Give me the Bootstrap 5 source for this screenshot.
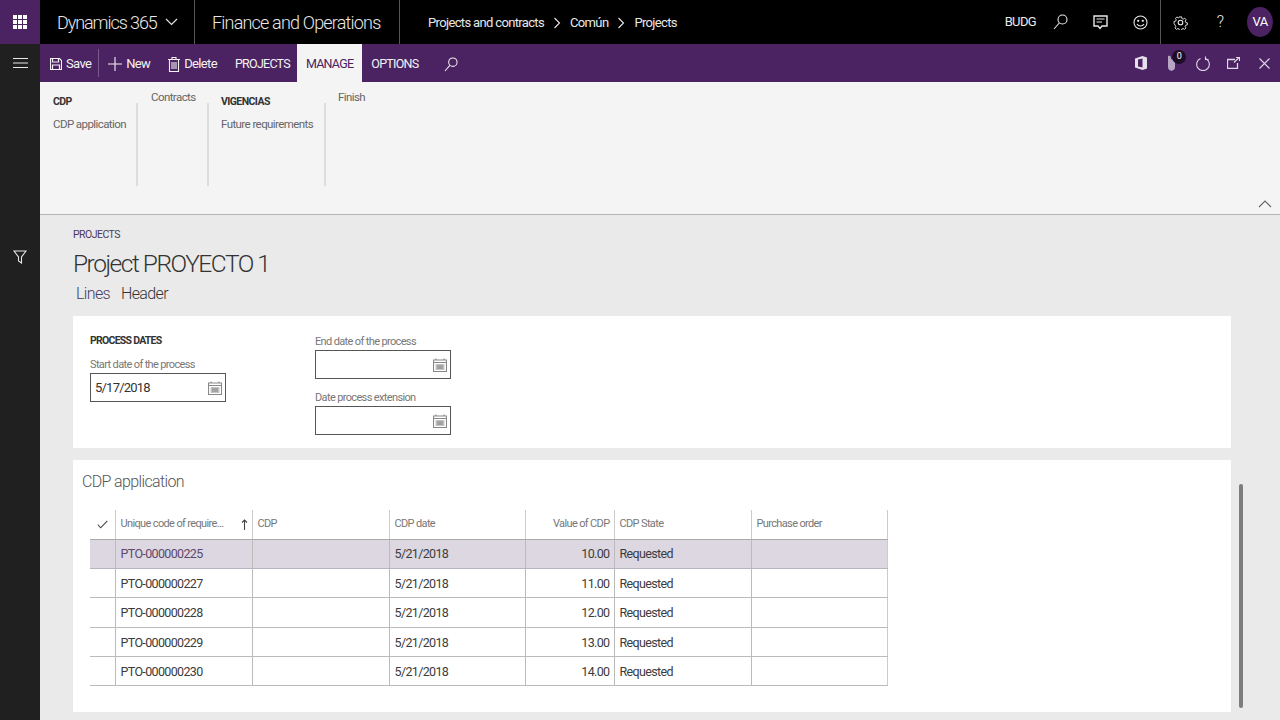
<!DOCTYPE html>
<html lang="en">
<head>
<meta charset="utf-8">
<title>Project PROYECTO 1</title>
<link href="https://cdn.jsdelivr.net/npm/bootstrap@5.3.0/dist/css/bootstrap.min.css" rel="stylesheet">
<style>
html,body{height:720px;overflow:hidden}
body{font-family:Roboto,"Open Sans",sans-serif;letter-spacing:-.04em;background:#eaeaea;color:#333}
svg{display:block;fill:none;stroke:currentColor;stroke-width:1.1}
.topbar{height:44px;background:#000;color:#e8e8e8;white-space:nowrap}
.waffle{width:40px;height:44px;background:#4b2362}
.brand{width:155px;padding-left:17px;font-size:18px;height:44px;border-right:1px solid #555;font-weight:300;letter-spacing:-.06em}
.appname{width:205px;padding-left:17px;font-size:18px;height:44px;border-right:1px solid #555;font-weight:300;letter-spacing:-.045em}
.crumbs{padding:1px 0 0 28px;font-size:13px;gap:9px;letter-spacing:-.05em}
.tools{height:44px}
.budg{font-size:13px;margin-right:4px}
.tool-btn{width:40px;height:44px}
.tool-q{font-size:16px;font-weight:300}
.sep-left{border-left:1px solid #555}
.avatar{width:26px;height:30px;margin:0 7px;border-radius:50%;background:#4b2362;color:#fff;font-size:13px}
.rail{width:40px;height:676px;background:#202020;color:#e8e8e8;flex:none}
.rail-btn{height:38px}
.rail-filter{margin-top:155px;height:40px}
.mainpane{position:relative;height:676px;overflow:hidden}
.cmdbar{height:38px;background:#4b2362;color:#f2f2f2;font-size:13px;white-space:nowrap;letter-spacing:-.05em}
.cmd{height:38px;padding:2px 9px 0;gap:4px}
.cmd-save{padding:2px 7px 0 10px;border-right:1px solid #7a5a8d;height:28px}
.cmd-new,.cmd-del{padding-right:18px}
.cmd-del,.cmd-proj{padding-left:0}
.cmd-proj{padding-right:7px}
.caps{font-size:12.5px;letter-spacing:-.06em}
.cmd-active{background:#f4f4f4;color:#4b2362}
.right-icons{color:#e0d6e6}
.right-btn{width:31px;height:38px;position:relative}
.right-first{margin-right:0;margin-left:2px}
.count{position:absolute;top:6px;left:16px;width:14px;height:14px;border-radius:50%;background:#1c0e29;color:#fff;font-size:9px}
.ribbon{height:133px;background:#f4f4f4;border-bottom:1px solid #b5b5b5;position:relative;font-size:11.5px;color:#666;padding-left:13px;white-space:nowrap;letter-spacing:-.05em}
.rb-group{height:104px;margin-top:8px}
.rb-g1{width:83px}
.rb-g2{width:69px;padding-left:13px}
.rb-g3{width:115px;padding-left:12px}
.rb-g4{padding-left:12px}
.rb-line{border-right:2px solid #ddd;margin-top:21px;height:83px;width:0}
.rb-head{font-weight:700;color:#333;font-size:10.5px;margin-top:5px;margin-bottom:7px;line-height:14px}
.rb-plain{line-height:14px;margin-top:0}
.chev{position:absolute;right:8px;bottom:6px;color:#666}
.bodypane{padding:0 49px 0 33px}
.eyebrow{font-size:10.5px;color:#4b3a5c;padding-top:12px;line-height:15px;text-transform:uppercase;letter-spacing:-.05em}
.pagetitle{font-size:24.5px;line-height:34px;margin:5px 0 0;color:#333;font-weight:300;letter-spacing:-.06em}
.tabsrow{font-size:16px;line-height:24px;gap:11px;padding:1px 0 0 3px;height:30px;font-weight:300}
.tab-on{color:#4b3a5c}
.panel-a{background:#fff;height:132px;margin-top:5px;padding:18px 17px}
.panel-b{background:#fff;height:252px;margin-top:12px;padding:10px 9px 0 9px}
.col-a{width:225px}
.sec-head{font-size:10.5px;font-weight:700;color:#333;line-height:14px;margin-bottom:10px;letter-spacing:-.07em}
.fld-label{font-size:11px;color:#777;line-height:14px;margin-bottom:1px}
.fld-first{margin-top:1px}
.fld{width:136px;height:29px;border:1px solid #555;background:#fff;padding:0 3px 0 4px;font-size:13px;color:#333;margin-bottom:12px;letter-spacing:-.06em}
.cal{color:#888}
.ptitle{font-size:16px;line-height:24px;color:#555;margin:0 0 16px;font-weight:300}
.gridt{table-layout:fixed;width:797px;margin:0 0 0 8px;border-collapse:collapse;color:#3c3c3c;font-size:12.5px}
.gridt col:nth-child(1){width:25px}
.gridt col:nth-child(2),.gridt col:nth-child(3),.gridt col:nth-child(6){width:137px}
.gridt col:nth-child(4),.gridt col:nth-child(7){width:136px}
.gridt col:nth-child(5){width:89px}
.gridt th{height:29px;font-weight:400;font-size:11px;color:#777;padding:0 4px 0 5px;border:0;border-right:1px solid #ccc;border-bottom:1px solid #aaa;background:#fff;white-space:nowrap;overflow:hidden;vertical-align:middle}
.gridt td{height:29.4px;padding:2px 4px 0 5px;border:0;border-right:1px solid #bbb;border-bottom:1px solid #bbb;background:#fff;white-space:nowrap;line-height:1;vertical-align:middle}
.gridt td:last-child,.gridt th:last-child{border-right:1px solid #ccc}
.gridt tr.sel td{background:#dcd7e1;border-bottom-color:#b9b4c0}
.gridt tr.sel td.codec{color:#5c4a6e}
.gridt .num{text-align:right}
.chk{color:#444;margin:0 auto}
.sortarrow{color:#444}
.office{fill:#e6e0ea;stroke:none}
.clip{fill:#b9a6c6;stroke:none}
.wafflesvg{stroke:none;fill:#fff}
.sbar{position:absolute;right:37px;top:440px;width:4px;height:224px;background:#7d7d7d;border-radius:2px}
</style>
</head>
<body>
<header class="topbar d-flex align-items-center">
  <div class="waffle d-flex align-items-center justify-content-center">
    <svg class="wafflesvg" width="14" height="14" viewBox="0 0 14 14"><path d="M0 0h4v4H0zM5 0h4v4H5zM10 0h4v4h-4zM0 5h4v4H0zM5 5h4v4H5zM10 5h4v4h-4zM0 10h4v4H0zM5 10h4v4H5zM10 10h4v4h-4z"/></svg>
  </div>
  <div class="brand d-flex align-items-center gap-2"><span>Dynamics 365</span>
    <svg width="13" height="8" viewBox="0 0 13 8"><path d="M1 1l5.500 5.500L12 1"/></svg></div>
  <div class="appname d-flex align-items-center"><span>Finance and Operations</span></div>
  <nav class="crumbs d-flex align-items-center">
    <span>Projects and contracts</span>
    <svg width="8" height="12" viewBox="0 0 8 12"><path d="M1.500 1l5 5-5 5"/></svg>
    <span>Común</span>
    <svg width="8" height="12" viewBox="0 0 8 12"><path d="M1.500 1l5 5-5 5"/></svg>
    <span>Projects</span>
  </nav>
  <div class="tools ms-auto d-flex align-items-center">
    <span class="budg">BUDG</span>
    <div class="tool-btn d-flex align-items-center justify-content-center">
      <svg width="15" height="16" viewBox="0 0 15 16"><circle cx="9.500" cy="5.500" r="4.500"/><path d="M6.300 9L1 15"/></svg></div>
    <div class="tool-btn d-flex align-items-center justify-content-center">
      <svg width="15" height="15" viewBox="0 0 15 15"><path d="M1 1h13v10H9l-2 2.500L5 11H1z" stroke-width="1.400"/><path d="M3.500 4h8M3.500 7h5.500"/></svg></div>
    <div class="tool-btn d-flex align-items-center justify-content-center">
      <svg width="15" height="15" viewBox="0 0 15 15"><circle cx="7.500" cy="7.500" r="6.500"/><circle cx="5.200" cy="5.800" r=".6"/><circle cx="9.800" cy="5.800" r=".6"/><path d="M4 9c1.500 2.600 5.500 2.600 7 0"/></svg></div>
    <div class="tool-btn sep-left d-flex align-items-center justify-content-center">
      <svg width="15" height="15" viewBox="0 0 15 15"><circle cx="7.500" cy="7.500" r="2.300"/><path d="M6.300 1h2.400l.4 1.900 1.500.7 1.700-1 1.600 1.700-1 1.600.6 1.500 1.800.4v2.400l-1.800.4-.7 1.500 1 1.600-1.700 1.700-1.600-1-1.500.6-.4 1.800H6.300l-.4-1.800-1.500-.6-1.600 1-1.700-1.700 1-1.600-.7-1.500L.1 8.700V6.300l1.800-.4.700-1.500-1-1.600 1.700-1.700 1.600 1 1.500-.7z" transform="translate(1 1) scale(.87)"/></svg></div>
    <div class="tool-btn tool-q d-flex align-items-center justify-content-center">?</div>
    <div class="avatar d-flex align-items-center justify-content-center">VA</div>
  </div>
</header>
<div class="d-flex">
  <aside class="rail">
    <div class="rail-btn d-flex align-items-center justify-content-center">
      <svg width="15" height="10" viewBox="0 0 15 10"><path d="M0 .5h15M0 5h15M0 9.500h15"/></svg></div>
    <div class="rail-filter d-flex align-items-center justify-content-center">
      <svg width="14" height="14" viewBox="0 0 14 14" stroke-width="1.400"><path d="M1 1h12L8.500 7v6l-3-2V7z"/></svg></div>
  </aside>
  <main class="mainpane flex-grow-1">
    <div class="cmdbar d-flex align-items-center">
      <div class="cmd cmd-save d-flex align-items-center">
        <svg width="12" height="12" viewBox="0 0 12 12"><path d="M.5.500h9l2 2v9H.5z"/><path d="M2.500 1v3h6V1M2.500 11V7h7v4" stroke-width="1.200"/></svg><span>Save</span></div>
      <div class="cmd cmd-new d-flex align-items-center">
        <svg width="14" height="14" viewBox="0 0 14 14"><path d="M7 0v14M0 7h14"/></svg><span>New</span></div>
      <div class="cmd cmd-del d-flex align-items-center">
        <svg width="12" height="15" viewBox="0 0 12 15"><path d="M1.500 2.500h9v12h-9zM0 2.500h12M4 2.500v-2h4v2M4 5v7M6 5v7M8 5v7"/></svg><span>Delete</span></div>
      <div class="cmd cmd-proj caps d-flex align-items-center"><span>PROJECTS</span></div>
      <div class="cmd cmd-active caps d-flex align-items-center"><span>MANAGE</span></div>
      <div class="cmd caps d-flex align-items-center"><span>OPTIONS</span></div>
      <div class="cmd d-flex align-items-center ms-2">
        <svg width="14" height="15" viewBox="0 0 15 16"><circle cx="9.500" cy="5.500" r="4.500"/><path d="M6.300 9L1 15"/></svg></div>
      <div class="right-icons ms-auto d-flex align-items-center">
        <div class="right-btn right-first d-flex align-items-center justify-content-center">
          <svg class="office" width="12" height="14" viewBox="0 0 12 14"><path d="M0 2.500L7.500 0 12 1.500v11L7.500 14 0 11.500zM7.500 2.500L3 3.500v7l4.500 1z" fill-rule="evenodd"/></svg></div>
        <div class="right-btn d-flex align-items-center justify-content-center">
          <svg class="clip" width="9" height="16" viewBox="0 0 9 16"><path d="M1 1c2-1 3 0 3 3l4 1v7c0 5-7 5-7 0z"/></svg>
          <span class="count d-flex align-items-center justify-content-center">0</span></div>
        <div class="right-btn d-flex align-items-center justify-content-center">
          <svg width="14" height="15" viewBox="0 0 14 15"><path d="M4.500 2.500a6.300 6.300 0 1 0 5 0"/><path d="M9.500 .5v3h3"/></svg></div>
        <div class="right-btn d-flex align-items-center justify-content-center">
          <svg width="13" height="12" viewBox="0 0 13 12"><path d="M8 2.500H.5v9h10V6" stroke-width="1.300"/><path d="M7 5.500l5-5M9 .5h3.500V4"/></svg></div>
        <div class="right-btn d-flex align-items-center justify-content-center">
          <svg width="11" height="11" viewBox="0 0 11 11"><path d="M.5.500l10 10M10.500.5l-10 10"/></svg></div>
      </div>
    </div>
    <section class="ribbon d-flex">
      <div class="rb-group rb-g1"><div class="rb-head">CDP</div><div>CDP application</div></div>
      <div class="rb-line"></div>
      <div class="rb-group rb-g2"><div class="rb-plain">Contracts</div></div>
      <div class="rb-line"></div>
      <div class="rb-group rb-g3"><div class="rb-head">VIGENCIAS</div><div>Future requirements</div></div>
      <div class="rb-line"></div>
      <div class="rb-group rb-g4"><div class="rb-plain">Finish</div></div>
      <svg class="chev" width="14" height="8" viewBox="0 0 14 8"><path d="M1 7l6-6 6 6"/></svg>
    </section>
    <div class="bodypane">
      <div class="eyebrow">Projects</div>
      <h1 class="pagetitle">Project PROYECTO 1</h1>
      <div class="tabsrow d-flex"><span class="tab-on">Lines</span><span>Header</span></div>
      <section class="panel-a d-flex">
        <div class="col-a">
          <div class="sec-head">PROCESS DATES</div>
          <div class="fld-label">Start date of the process</div>
          <div class="fld d-flex align-items-center justify-content-between"><span>5/17/2018</span>
            <svg class="cal" width="14" height="14" viewBox="0 0 14 14"><path d="M.5 2h13v11.500H.5zM.5 4.500h13M3 .5V2M11 .5V2M2.500 7h9M2.500 9h9M2.500 11h9M5 6.500v5M7 6.500v5M9 6.500v5"/></svg></div>
        </div>
        <div>
          <div class="fld-label fld-first">End date of the process</div>
          <div class="fld d-flex align-items-center justify-content-end">
            <svg class="cal" width="14" height="14" viewBox="0 0 14 14"><path d="M.5 2h13v11.500H.5zM.5 4.500h13M3 .5V2M11 .5V2M2.500 7h9M2.500 9h9M2.500 11h9M5 6.500v5M7 6.500v5M9 6.500v5"/></svg></div>
          <div class="fld-label">Date process extension</div>
          <div class="fld d-flex align-items-center justify-content-end">
            <svg class="cal" width="14" height="14" viewBox="0 0 14 14"><path d="M.5 2h13v11.500H.5zM.5 4.500h13M3 .5V2M11 .5V2M2.500 7h9M2.500 9h9M2.500 11h9M5 6.500v5M7 6.500v5M9 6.500v5"/></svg></div>
        </div>
      </section>
      <section class="panel-b">
        <h2 class="ptitle">CDP application</h2>
        <table class="table gridt">
          <colgroup><col><col><col><col><col><col><col></colgroup>
          <thead><tr>
            <th><svg class="chk" width="11" height="9" viewBox="0 0 11 9" stroke-width="1.500"><path d="M.7 4.500l3 3.300L10.300.8"/></svg></th>
            <th><div class="d-flex align-items-center justify-content-between"><span>Unique code of require...</span><svg class="sortarrow" width="7" height="11" viewBox="0 0 7 11"><path d="M3.500 11V1M1 3.500L3.500 1 6 3.500"/></svg></div></th>
            <th>CDP</th><th>CDP date</th><th class="num">Value of CDP</th><th>CDP State</th><th>Purchase order</th>
          </tr></thead>
          <tbody>
            <tr class="sel"><td></td><td class="codec">PTO-000000225</td><td></td><td>5/21/2018</td><td class="num">10.00</td><td>Requested</td><td></td></tr>
            <tr><td></td><td>PTO-000000227</td><td></td><td>5/21/2018</td><td class="num">11.00</td><td>Requested</td><td></td></tr>
            <tr><td></td><td>PTO-000000228</td><td></td><td>5/21/2018</td><td class="num">12.00</td><td>Requested</td><td></td></tr>
            <tr><td></td><td>PTO-000000229</td><td></td><td>5/21/2018</td><td class="num">13.00</td><td>Requested</td><td></td></tr>
            <tr><td></td><td>PTO-000000230</td><td></td><td>5/21/2018</td><td class="num">14.00</td><td>Requested</td><td></td></tr>
          </tbody>
        </table>
      </section>
    </div>
    <div class="sbar"></div>
  </main>
</div>
<script src="https://cdn.jsdelivr.net/npm/bootstrap@5.3.0/dist/js/bootstrap.bundle.min.js"></script>
</body>
</html>
